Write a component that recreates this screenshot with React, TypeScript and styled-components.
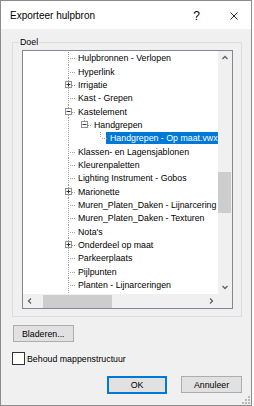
import React from 'react';
import styled, { createGlobalStyle } from 'styled-components';

const Global = createGlobalStyle`
  html, body { margin: 0; padding: 0; background: #ffffff; }
  body { font-family: "Liberation Sans", Arial, sans-serif; color: #000; }
  * { box-sizing: border-box; }
`;

const Window = styled.div`
  position: relative;
  width: 252px;
  height: 406px;
  border: 1px solid #8c8c8c;
  background: #f0f0f0;
  display: flex;
  flex-direction: column;
`;

const TitleBar = styled.div`
  height: 28px;
  flex: none;
  background: #ffffff;
  display: flex;
  align-items: center;
  padding: 0 13px 0 9px;
`;

const TitleText = styled.div`
  flex: 1;
  font-size: 10px;
  line-height: 12px;
  padding-top: 2px;
`;

const HelpGlyph = styled.div`
  font-size: 12px;
  line-height: 12px;
  padding-top: 2px;
  margin-right: 30px;
`;

const CloseGlyph = styled.svg`
  width: 8px;
  height: 8px;
  display: block;
  margin-top: 2px;
`;

const Body = styled.div`
  flex: 1;
  display: flex;
  flex-direction: column;
  padding: 0 9px 0 11px;
  font-size: 8.8px;
`;

const GroupBox = styled.fieldset`
  margin: 8px 0 0 0;
  min-width: 0;
  border: 1px solid #dcdcdc;
  padding: 3px 8px 7px 9px;
`;

const Legend = styled.legend`
  margin-left: -3px;
  padding: 0 1px;
  font-size: 8.8px;
  line-height: 10px;
`;

const TreeBox = styled.div`
  width: 100%;
  height: 259px;
  border: 1px solid #828790;
  background: #ffffff;
  display: grid;
  grid-template-columns: 1fr 14px;
  grid-template-rows: 1fr 14px;
`;

const Viewport = styled.div`
  overflow: hidden;
  padding: 0.67px 0 0 37px;
  display: flex;
  flex-direction: column;
`;

const Row = styled.div`
  height: 13.33px;
  flex: none;
  display: flex;
  align-items: center;
  white-space: nowrap;
`;

const TailRow = styled.div`
  flex: 1;
  display: flex;
`;

const dotV = `linear-gradient(to bottom, #a0a0a0 50%, transparent 50%)`;
const dotH = `linear-gradient(to right, #a0a0a0 50%, transparent 50%)`;

const GuideCell = styled.div<{ $on: boolean }>`
  position: relative;
  width: 16px;
  height: 100%;
  flex: none;
  &::before {
    content: '';
    display: ${(p) => (p.$on ? 'block' : 'none')};
    position: absolute;
    left: 8px;
    top: 0;
    bottom: 0;
    width: 1px;
    background-image: ${dotV};
    background-size: 1px 2px;
  }
`;

const NodeCell = styled.div<{ $last: boolean }>`
  position: relative;
  width: 16px;
  height: 100%;
  flex: none;
  display: flex;
  align-items: center;
  &::before {
    content: '';
    position: absolute;
    left: 8px;
    top: 0;
    height: ${(p) => (p.$last ? '50%' : '100%')};
    width: 1px;
    background-image: ${dotV};
    background-size: 1px 2px;
  }
  &::after {
    content: '';
    position: absolute;
    left: 9px;
    right: 1px;
    top: 50%;
    height: 1px;
    background-image: ${dotH};
    background-size: 2px 1px;
    background-position: 1px 0;
  }
`;

const Expander = styled.svg`
  position: absolute;
  left: 5px;
  top: calc(50% - 3.5px);
  width: 7px;
  height: 7px;
  z-index: 1;
`;

const Label = styled.span<{ $selected: boolean }>`
  margin-left: -2px;
  padding: 0 2px 0 4px;
  height: 12px;
  line-height: 12px;
  font-size: 8.8px;
  background: ${(p) => (p.$selected ? '#0078d7' : 'transparent')};
  color: ${(p) => (p.$selected ? '#ffffff' : '#000000')};
  padding-right: ${(p) => (p.$selected ? '12px' : '2px')};
`;

const VScroll = styled.div`
  background: #f0f0f0;
  display: flex;
  flex-direction: column;
`;

const HScroll = styled.div`
  background: #f0f0f0;
  display: flex;
`;

const ArrowBtn = styled.div`
  width: 14px;
  height: 14px;
  flex: none;
  display: flex;
  align-items: center;
  justify-content: center;
`;

const VTrack = styled.div`
  flex: 1;
  display: flex;
  flex-direction: column;
`;

const HTrack = styled.div`
  flex: 1;
  display: flex;
`;

const VThumb = styled.div<{ $offset: number; $size: number }>`
  margin-top: ${(p) => p.$offset}px;
  height: ${(p) => p.$size}px;
  width: 13px;
  background: #cdcdcd;
`;

const HThumb = styled.div<{ $offset: number; $size: number }>`
  margin-left: ${(p) => p.$offset}px;
  width: ${(p) => p.$size}px;
  height: 13px;
  margin-top: 1px;
  background: #cdcdcd;
`;

const Corner = styled.div`
  background: #f0f0f0;
`;

const Button = styled.button<{ $default?: boolean; $w: number }>`
  width: ${(p) => p.$w}px;
  height: ${(p) => (p.$default ? 18 : 17)}px;
  padding: 0;
  font-family: "Liberation Sans", Arial, sans-serif;
  font-size: 8.8px;
  color: #000;
  background: #e1e1e1;
  border: ${(p) => (p.$default ? '2px solid #0078d7' : '1px solid #adadad')};
  display: flex;
  align-items: center;
  justify-content: center;
`;

const BrowseButton = styled(Button)`
  margin: 8px 0 0 1px;
  justify-content: flex-start;
  padding-left: 8px;
`;

const CheckRow = styled.label`
  margin-top: 10px;
  display: flex;
  align-items: center;
  gap: 2px;
  height: 13px;
`;

const CheckBox = styled.span`
  width: 13px;
  height: 13px;
  border: 1px solid #333333;
  background: #ffffff;
  flex: none;
`;

const ButtonRow = styled.div`
  margin-top: 11px;
  display: flex;
  justify-content: flex-end;
  gap: 14px;
`;

const Grip = styled.svg`
  position: absolute;
  right: 1px;
  bottom: 1px;
  width: 8px;
  height: 8px;
`;

type Item = { label: string; level: number; exp?: '+' | '-'; last?: boolean; guides?: boolean[]; selected?: boolean };

const items: Item[] = [
  { label: 'Hulpbronnen - Verlopen', level: 1 },
  { label: 'Hyperlink', level: 1 },
  { label: 'Irrigatie', level: 1, exp: '+' },
  { label: 'Kast - Grepen', level: 1 },
  { label: 'Kastelement', level: 1, exp: '-' },
  { label: 'Handgrepen', level: 2, exp: '-', last: true, guides: [true] },
  { label: 'Handgrepen - Op maat.vwx', level: 3, last: true, guides: [true, false], selected: true },
  { label: 'Klassen- en Lagensjablonen', level: 1 },
  { label: 'Kleurenpaletten', level: 1 },
  { label: 'Lighting Instrument - Gobos', level: 1 },
  { label: 'Marionette', level: 1, exp: '+' },
  { label: 'Muren_Platen_Daken - Lijnarcering', level: 1 },
  { label: 'Muren_Platen_Daken - Texturen', level: 1 },
  { label: "Nota's", level: 1 },
  { label: 'Onderdeel op maat', level: 1, exp: '+' },
  { label: 'Parkeerplaats', level: 1 },
  { label: 'Pijlpunten', level: 1 },
  { label: 'Planten - Lijnarceringen', level: 1 },
];

const ExpanderIcon = ({ kind }: { kind: '+' | '-' }) => (
  <Expander viewBox="0 0 7 7">
    <rect x="0.5" y="0.5" width="6" height="6" fill="#fff" stroke="#919191" />
    <line x1="1.5" y1="3.5" x2="5.5" y2="3.5" stroke="#333" />
    {kind === '+' && <line x1="3.5" y1="1.5" x2="3.5" y2="5.5" stroke="#333" />}
  </Expander>
);

const Chevron = ({ dir }: { dir: 'up' | 'down' | 'left' | 'right' }) => {
  const pts = {
    up: '4.5,8 7,5.5 9.5,8',
    down: '4.5,6 7,8.5 9.5,6',
    left: '8,4.5 5.5,7 8,9.5',
    right: '6,4.5 8.5,7 6,9.5',
  }[dir];
  return (
    <svg width="14" height="14" viewBox="0 0 14 14">
      <polyline points={pts} fill="none" stroke="#606060" strokeWidth="1.3" />
    </svg>
  );
};

export default function App() {
  return (
    <>
      <Global />
      <Window>
        <TitleBar>
          <TitleText>Exporteer hulpbron</TitleText>
          <HelpGlyph>?</HelpGlyph>
          <CloseGlyph viewBox="0 0 8 8">
            <line x1="0.5" y1="0.5" x2="7.5" y2="7.5" stroke="#111" strokeWidth="0.9" />
            <line x1="7.5" y1="0.5" x2="0.5" y2="7.5" stroke="#111" strokeWidth="0.9" />
          </CloseGlyph>
        </TitleBar>
        <Body>
          <GroupBox>
            <Legend>Doel</Legend>
            <TreeBox>
              <Viewport>
                {items.map((it) => (
                  <Row key={it.label}>
                    {(it.guides || []).map((g, i) => (
                      <GuideCell key={i} $on={g} />
                    ))}
                    <NodeCell $last={!!it.last}>{it.exp && <ExpanderIcon kind={it.exp} />}</NodeCell>
                    <Label $selected={!!it.selected}>{it.label}</Label>
                  </Row>
                ))}
                <TailRow>
                  <GuideCell $on />
                </TailRow>
              </Viewport>
              <VScroll>
                <ArrowBtn>
                  <Chevron dir="up" />
                </ArrowBtn>
                <VTrack>
                  <VThumb $offset={107} $size={41} />
                </VTrack>
                <ArrowBtn>
                  <Chevron dir="down" />
                </ArrowBtn>
              </VScroll>
              <HScroll>
                <ArrowBtn>
                  <Chevron dir="left" />
                </ArrowBtn>
                <HTrack>
                  <HThumb $offset={6} $size={69} />
                </HTrack>
                <ArrowBtn>
                  <Chevron dir="right" />
                </ArrowBtn>
              </HScroll>
              <Corner />
            </TreeBox>
          </GroupBox>
          <BrowseButton $w={61}>Bladeren...</BrowseButton>
          <CheckRow>
            <CheckBox />
            <span>Behoud mappenstructuur</span>
          </CheckRow>
          <ButtonRow>
            <Button $default $w={60}>OK</Button>
            <Button $w={61}>Annuleer</Button>
          </ButtonRow>
        </Body>
        <Grip viewBox="0 0 8 8">
          {[
            [6, 0],
            [3, 3],
            [6, 3],
            [0, 6],
            [3, 6],
            [6, 6],
          ].map(([x, y], i) => (
            <rect key={i} x={x} y={y} width="2" height="2" fill="#b8b8b8" />
          ))}
        </Grip>
      </Window>
    </>
  );
}
